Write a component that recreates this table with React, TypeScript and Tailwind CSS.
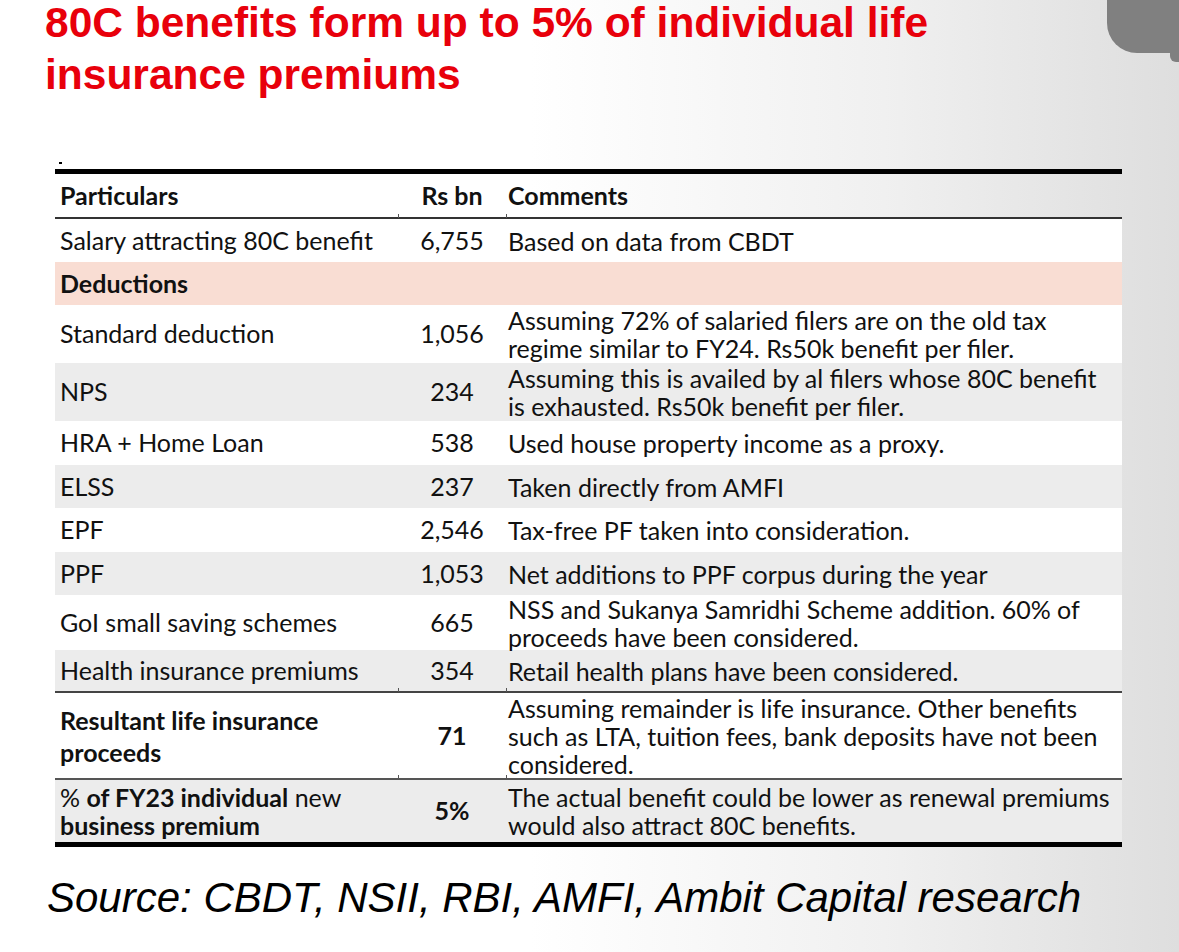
import React from "react";

type Row = {
  label: React.ReactNode;
  value: React.ReactNode;
  comment: string[];
  height: string;
  bg: string;
};

const rows: Row[] = [
  {
    label: "Salary attracting 80C benefit",
    value: "6,755",
    comment: ["Based on data from CBDT"],
    height: "h-[43px]",
    bg: "bg-white",
  },
  {
    label: <span className="font-bold">Deductions</span>,
    value: "",
    comment: [],
    height: "h-[43px]",
    bg: "bg-[#f9ddd3]",
  },
  {
    label: "Standard deduction",
    value: "1,056",
    comment: [
      "Assuming 72% of salaried filers are on the old tax",
      "regime similar to FY24. Rs50k benefit per filer.",
    ],
    height: "h-[58px]",
    bg: "bg-white",
  },
  {
    label: "NPS",
    value: "234",
    comment: [
      "Assuming this is availed by al filers whose 80C benefit",
      "is exhausted. Rs50k benefit per filer.",
    ],
    height: "h-[58px]",
    bg: "bg-[#ececec]",
  },
  {
    label: "HRA + Home Loan",
    value: "538",
    comment: ["Used house property income as a proxy."],
    height: "h-[44px]",
    bg: "bg-white",
  },
  {
    label: "ELSS",
    value: "237",
    comment: ["Taken directly from AMFI"],
    height: "h-[43px]",
    bg: "bg-[#ececec]",
  },
  {
    label: "EPF",
    value: "2,546",
    comment: ["Tax-free PF taken into consideration."],
    height: "h-[44px]",
    bg: "bg-white",
  },
  {
    label: "PPF",
    value: "1,053",
    comment: ["Net additions to PPF corpus during the year"],
    height: "h-[43px]",
    bg: "bg-[#ececec]",
  },
  {
    label: "GoI small saving schemes",
    value: "665",
    comment: [
      "NSS and Sukanya Samridhi Scheme addition. 60% of",
      "proceeds have been considered.",
    ],
    height: "h-[55px]",
    bg: "bg-white",
  },
  {
    label: "Health insurance premiums",
    value: "354",
    comment: ["Retail health plans have been considered."],
    height: "h-[41px]",
    bg: "bg-[#ececec]",
  },
];

function TableRow({ row }: { row: Row }) {
  return (
    <div className={`grid grid-cols-[343px_108px_1fr] items-center ${row.height} ${row.bg}`}>
      <div className="whitespace-nowrap pl-[5px]">{row.label}</div>
      <div className="text-center">{row.value}</div>
      <div className="whitespace-nowrap pl-[2px] leading-[28px]">
        {row.comment.map((line) => (
          <div key={line}>{line}</div>
        ))}
      </div>
    </div>
  );
}

// thin rule with the small column ticks seen in the source table
function Rule({ color }: { color: string }) {
  return (
    <div className={`relative h-[2px] ${color}`}>
      <span className="absolute left-[343px] top-[-3px] h-[4px] w-[1px] bg-[#555]" />
      <span className="absolute left-[451px] top-[-3px] h-[4px] w-[1px] bg-[#555]" />
    </div>
  );
}

export default function App() {
  return (
    <div className="relative h-[952px] w-[1179px] overflow-hidden bg-[linear-gradient(90deg,#ffffff_0%,#ffffff_45%,#f0f0f0_75%,#dedede_100%)]">
      {/* slide tab in the corner */}
      <div className="absolute right-0 top-0 h-[53px] w-[72px] rounded-bl-[30px] bg-[#808080]" />
      <div className="absolute right-0 top-[50px] h-[12px] w-[9px] rounded-bl-[6px] bg-[#808080]" />

      <h1 className="-mt-[3px] pl-[45px] font-['Liberation_Sans',Arial,sans-serif] text-[42.5px] font-bold leading-[52px] text-[#e8000b]">
        80C benefits form up to 5% of individual life
        <br />
        insurance premiums
      </h1>

      <div className="relative ml-[55px] mt-[68px] w-[1067px] font-['Lato',sans-serif] text-[25px] text-[#111]">
        <div className="absolute -top-[7px] left-[4px] h-[2px] w-[3px] bg-black" />
        <div className="h-[5px] bg-black" />
        <div className="grid h-[43px] grid-cols-[343px_108px_1fr] items-center font-bold">
          <div className="pl-[5px]">Particulars</div>
          <div className="text-center">Rs bn</div>
          <div className="pl-[2px]">Comments</div>
        </div>
        <Rule color="bg-[#333]" />
        {rows.map((row, i) => (
          <TableRow key={i} row={row} />
        ))}
        <Rule color="bg-[#444]" />
        <div className="grid h-[85px] grid-cols-[343px_108px_1fr] items-center bg-white">
          <div className="pl-[5px] font-bold leading-[32px]">
            Resultant life insurance
            <br />
            proceeds
          </div>
          <div className="text-center font-bold">71</div>
          <div className="whitespace-nowrap pl-[2px] leading-[28px]">
            <div>Assuming remainder is life insurance. Other benefits</div>
            <div>such as LTA, tuition fees, bank deposits have not been</div>
            <div>considered.</div>
          </div>
        </div>
        <Rule color="bg-[#555]" />
        <div className="grid h-[62px] grid-cols-[343px_108px_1fr] items-center bg-[#ececec]">
          <div className="whitespace-nowrap pl-[5px] leading-[28px]">
            <span>%</span> <span className="font-bold">of FY23 individual</span> <span>new</span>
            <br />
            <span className="font-bold">business premium</span>
          </div>
          <div className="text-center font-bold">5%</div>
          <div className="whitespace-nowrap pl-[2px] leading-[28px]">
            <div>The actual benefit could be lower as renewal premiums</div>
            <div>would also attract 80C benefits.</div>
          </div>
        </div>
        <div className="h-[5px] bg-black" />
      </div>

      <p className="mt-[27px] pl-[47px] font-['Liberation_Sans',Arial,sans-serif] text-[42px] italic leading-[48px] text-black">
        Source: CBDT, NSII, RBI, AMFI, Ambit Capital research
      </p>
    </div>
  );
}
